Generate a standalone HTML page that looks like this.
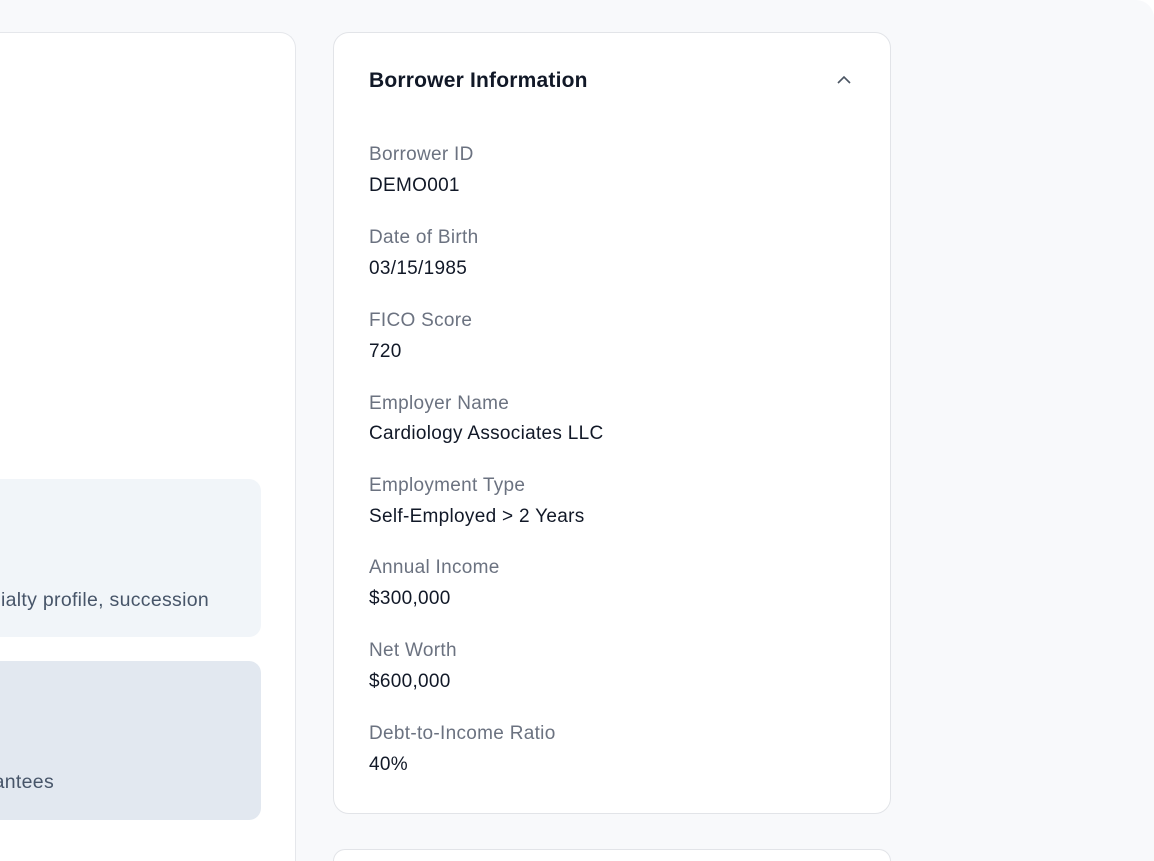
<!DOCTYPE html>
<html><head><style>
html,body{margin:0;padding:0;width:1154px;height:861px;overflow:hidden;background:#fff;font-family:"Liberation Sans",Arial,sans-serif;}
.wrap{position:relative;width:1154px;height:861px;overflow:hidden;}
.bg{position:absolute;left:0;top:0;width:1154px;height:861px;background:#f8f9fb;border-top-right-radius:18px;}
.left{position:absolute;left:0;top:32px;width:296px;height:829px;box-sizing:border-box;background:#fff;border:1px solid #e5e7eb;border-left:none;border-bottom:none;border-top-right-radius:16px;}
.b1{position:absolute;left:0;top:479px;width:261px;height:158px;background:#f1f5f9;border-radius:0 12px 12px 0;}
.b2{position:absolute;left:0;top:661px;width:261px;height:159px;background:#e2e8f0;border-radius:0 12px 12px 0;}
.t{position:absolute;font-size:19.5px;letter-spacing:0.3px;color:#475569;white-space:nowrap;}
.card{position:absolute;left:333px;top:32px;width:556px;height:780px;background:#fff;border:1px solid #e2e4e8;border-radius:16px;}
.card2{position:absolute;left:333px;top:849px;width:558px;height:12px;box-sizing:border-box;background:#fff;border:1px solid #e2e4e8;border-bottom:none;border-radius:16px 16px 0 0;}
h2{position:absolute;left:35px;top:36px;margin:0;font-size:21px;font-weight:bold;color:#111827;letter-spacing:0.2px;}
.l{position:absolute;left:35px;font-size:19px;letter-spacing:0.3px;color:#6b7280;white-space:nowrap;}
.v{position:absolute;left:35px;font-size:19px;letter-spacing:0.3px;color:#111827;white-space:nowrap;}
</style></head><body><div class="wrap">
<div class="bg"></div>
<div class="left"></div>
<div class="b1"></div>
<div class="b2"></div>
<div class="t" style="right:945px;top:589px;">ialty profile, succession</div>
<div class="t" style="right:1100px;top:771px;">antees</div>
<div class="card">
<h2>Borrower Information</h2>
<svg style="position:absolute;left:502px;top:41px" width="16" height="12" viewBox="0 0 16 12"><path d="M2 9 L8 3 L14 9" fill="none" stroke="#4b5563" stroke-width="1.6"/></svg>
<div class="l" style="top:111px">Borrower ID</div><div class="v" style="top:142px">DEMO001</div>
<div class="l" style="top:194px">Date of Birth</div><div class="v" style="top:225px">03/15/1985</div>
<div class="l" style="top:277px">FICO Score</div><div class="v" style="top:308px">720</div>
<div class="l" style="top:360px">Employer Name</div><div class="v" style="top:390px">Cardiology Associates LLC</div>
<div class="l" style="top:442px">Employment Type</div><div class="v" style="top:473px">Self-Employed &gt; 2 Years</div>
<div class="l" style="top:524px">Annual Income</div><div class="v" style="top:555px">$300,000</div>
<div class="l" style="top:607px">Net Worth</div><div class="v" style="top:638px">$600,000</div>
<div style="position:absolute;left:35px;top:688px;height:21px;overflow:hidden;width:400px;"><div class="l" style="left:0;top:2px">Debt-to-Income Ratio</div></div>
<div class="v" style="top:721px">40%</div>
</div>
<div class="card2"></div>
</div></body></html>
